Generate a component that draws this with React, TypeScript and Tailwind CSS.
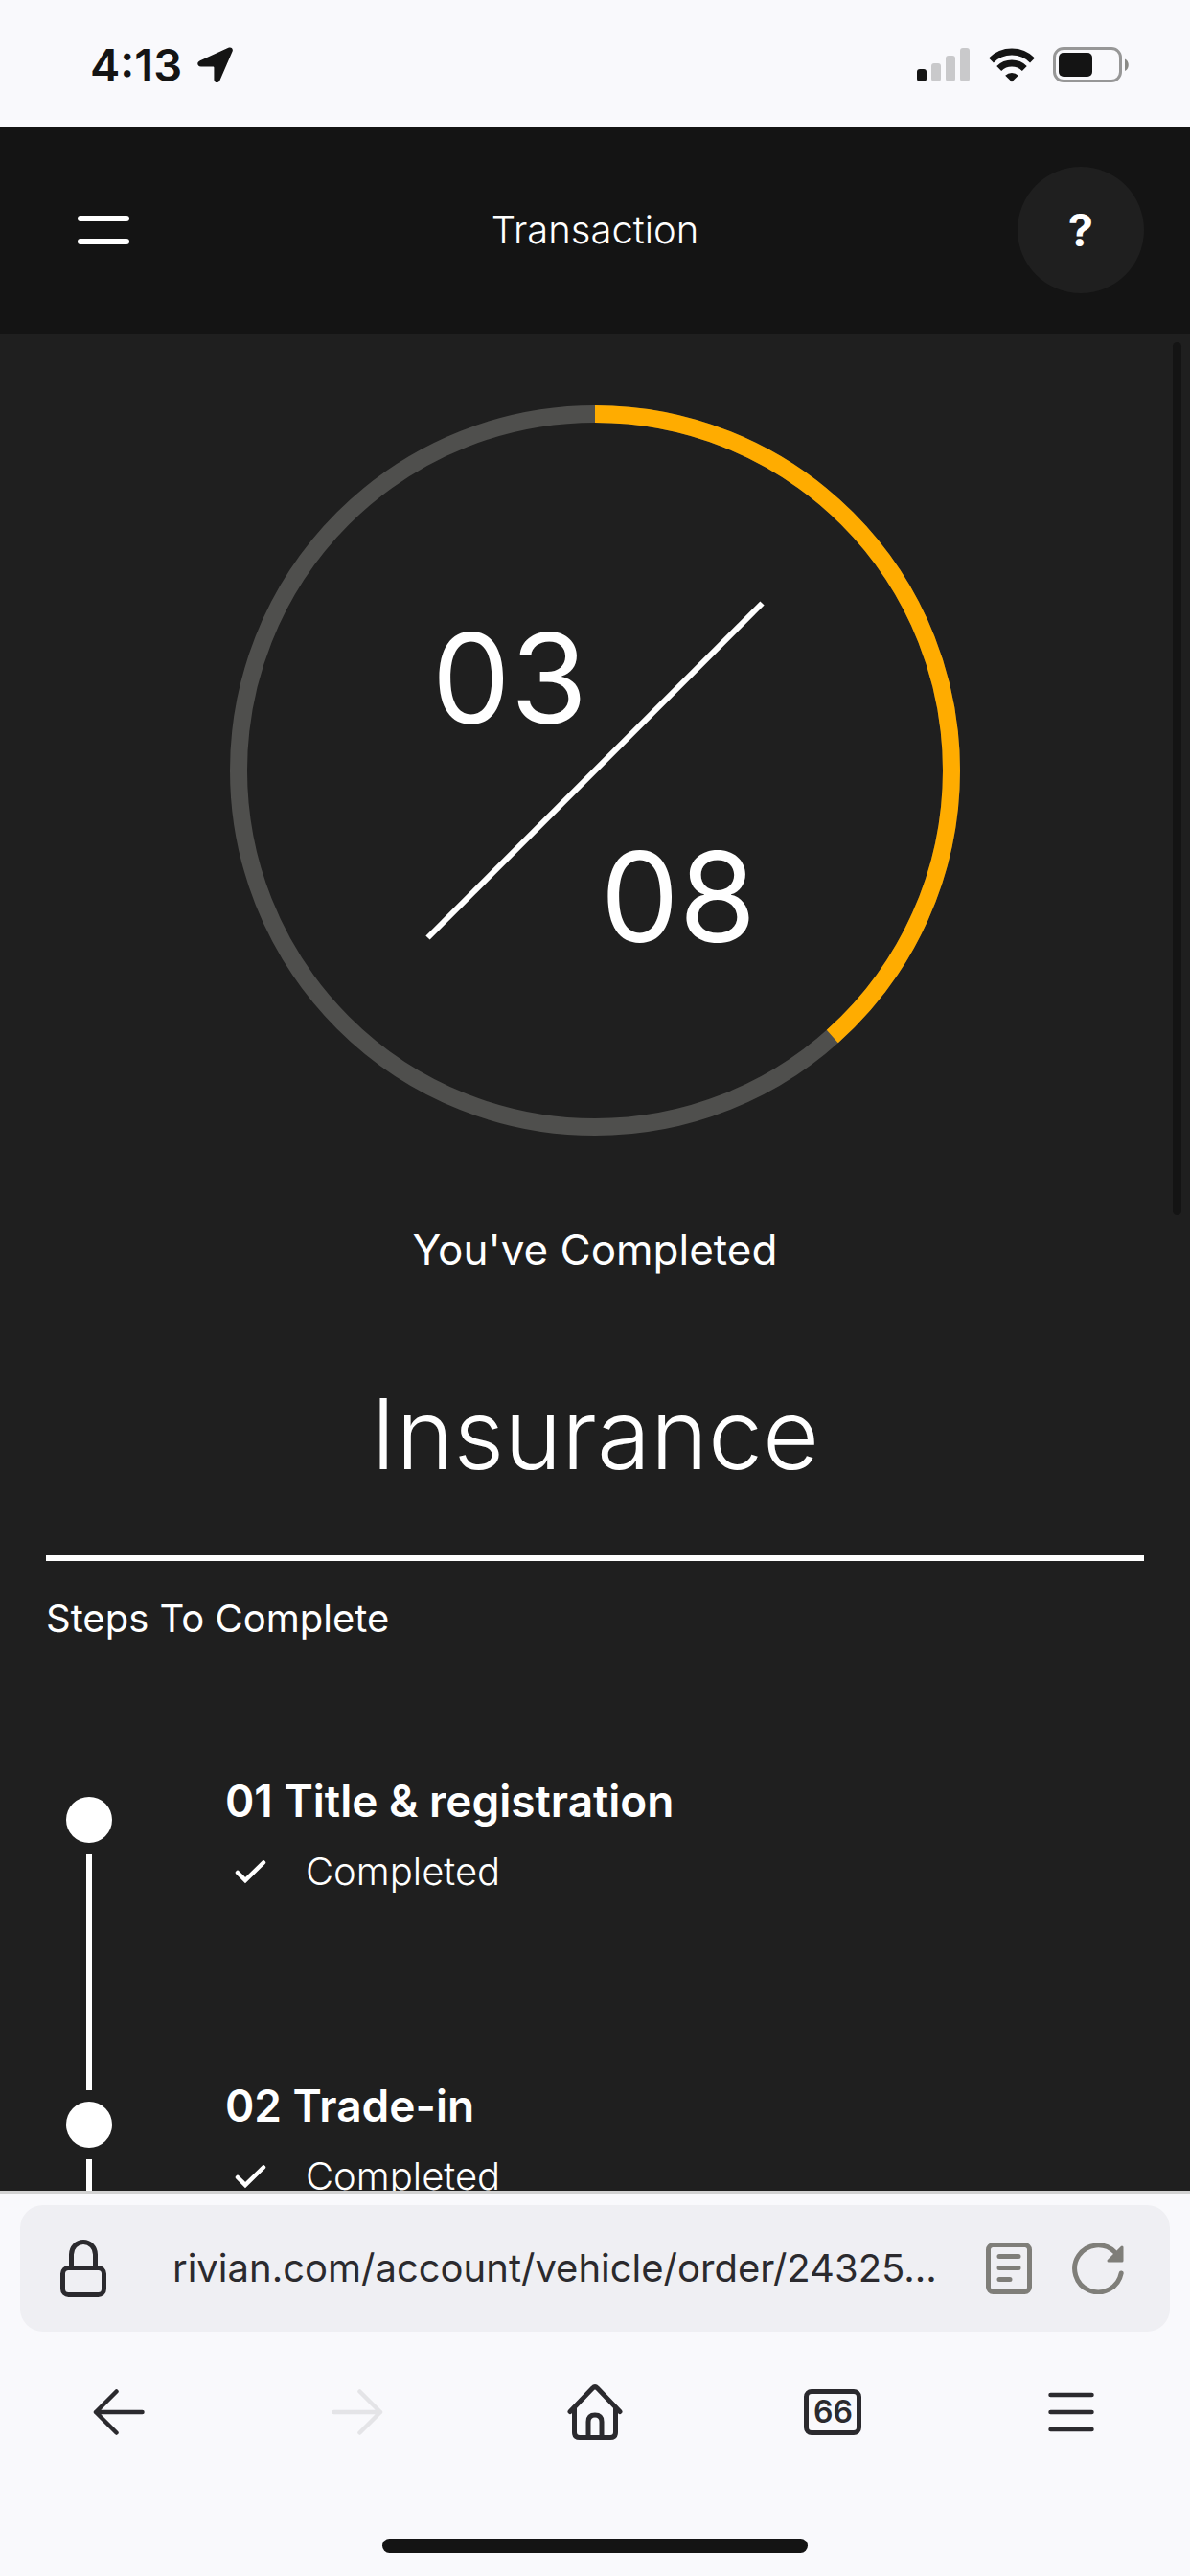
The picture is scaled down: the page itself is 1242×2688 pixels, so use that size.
import { ReactNode } from 'react'

const steps = [
  { id: '01', title: 'Title & registration', status: 'Completed' },
  { id: '02', title: 'Trade-in', status: 'Completed' },
]

function StatusBar() {
  return (
    <div className="flex h-[132px] shrink-0 items-center justify-between bg-[#f9f9fc] pt-1 pl-[94px] pr-[63px] text-[#141414]">
      <div className="flex items-center gap-4">
        <span className="text-[47px] leading-[56px] font-semibold">4:13</span>
        <svg width="38" height="38" viewBox="0 0 38 38" fill="currentColor" aria-hidden="true">
          <path d="M2.8 14.2 32.4.8c3-1.2 5.2 1 4.2 3.8L23.4 35c-1.400 3.200-6 2.600-6-1V21.600c0-.8-.4-1.200-1.200-1.200H3.800c-4.200 0-4.800-4.600-1-6.200Z" />
        </svg>
      </div>
      <div className="flex items-center gap-[19px]">
        <svg width="56" height="36" viewBox="0 0 56 36" aria-hidden="true">
          <rect x="0" y="22" width="10" height="13" rx="3" fill="#141414" />
          <rect x="15" y="16" width="10" height="19" rx="3" fill="#c9c9cb" />
          <rect x="30" y="8" width="10" height="27" rx="3" fill="#c9c9cb" />
          <rect x="45" y="0" width="10" height="35" rx="3" fill="#c9c9cb" />
        </svg>
        <svg width="48" height="36" viewBox="0 0 48 36" fill="none" stroke="#141414" aria-hidden="true">
          <path d="M2.500 12.900A30.500 30.500 0 0 1 45.500 12.900" strokeWidth="7" />
          <path d="M10.700 21.400A19 19 0 0 1 37.300 21.400" strokeWidth="7" />
          <path d="M24 35.600 17.200 28.800a9.600 9.600 0 0 1 13.600 0Z" fill="#141414" stroke="none" />
        </svg>
        <svg width="80" height="38" viewBox="0 0 80 38" aria-hidden="true">
          <rect x="1.500" y="1.500" width="69" height="34" rx="9.500" fill="none" stroke="#979797" strokeWidth="3" />
          <rect x="6" y="6" width="35" height="25" rx="5" fill="#141414" />
          <path d="M75 12.500c5 2 5 10.500 0 12.500Z" fill="#8a8a86" />
        </svg>
      </div>
    </div>
  )
}

function Header() {
  return (
    <header className="grid h-[216px] shrink-0 grid-cols-[1fr_auto_1fr] items-center bg-[#141414] px-12 text-white">
      <button type="button" aria-label="Menu" className="flex h-24 w-[120px] flex-col items-center justify-center gap-[18px]">
        <span className="h-[6px] w-[54px] rounded-full bg-white" />
        <span className="h-[6px] w-[54px] rounded-full bg-white" />
      </button>
      <h1 className="text-[40px] leading-[56px] font-light">Transaction</h1>
      <button
        type="button"
        aria-label="Help"
        className="size-[132px] justify-self-end rounded-full bg-[#1f1f1f] text-[47px] leading-[56px] font-bold"
      >
        ?
      </button>
    </header>
  )
}

function ProgressRing({ done, total }: { done: string; total: string }) {
  return (
    <svg className="w-[762px] max-w-full" viewBox="0 0 762 762" fill="none" role="img" aria-label={`${done} / ${total}`}>
      <circle cx="381" cy="381" r="372" stroke="#4f4f4d" strokeWidth="18" />
      <circle
        cx="381"
        cy="381"
        r="372"
        stroke="#ffac00"
        strokeWidth="18"
        pathLength="1000"
        strokeDasharray="384 1000"
        transform="rotate(-90 381 381)"
      />
      <path d="M206.500 555.500 555.500 206.500" stroke="#fff" strokeWidth="6" />
      <g className="text-[130px]" fill="#fff" textAnchor="middle">
        <text x="292" y="332">{done}</text>
        <text x="468" y="560">{total}</text>
      </g>
    </svg>
  )
}

function Step({ id, title, status }: { id: string; title: string; status: string }) {
  return (
    <li className="flex min-h-[318px] gap-[118px]">
      <div className="flex w-12 shrink-0 flex-col items-center gap-3 pb-3">
        <span className="size-12 rounded-full bg-white" />
        <span className="w-[6px] flex-1 bg-white" />
      </div>
      <div className="-mt-6">
        <h3 className="text-[46px] leading-[56px] font-semibold">
          {id} {title}
        </h3>
        <div className="mt-[18px] flex items-center gap-10 pl-2">
          <svg width="36" height="28" viewBox="0 0 36 28" fill="none" stroke="#fff" strokeWidth="4.500" strokeLinecap="round" aria-hidden="true">
            <path d="m5 15 8 8L32 4.500" />
          </svg>
          <p className="text-[40px] leading-[56px] font-light">{status}</p>
        </div>
      </div>
    </li>
  )
}

function NavButton({ label, disabled, children }: { label: string; disabled?: boolean; children: ReactNode }) {
  return (
    <button type="button" aria-label={label} disabled={disabled} className="flex h-24 items-center justify-center text-[#2b2a2e] disabled:text-[#e4e4e7]">
      {children}
    </button>
  )
}

const line = {
  fill: 'none',
  stroke: 'currentColor',
  strokeWidth: 5,
  strokeLinecap: 'round',
  strokeLinejoin: 'round',
} as const

function BrowserBar() {
  return (
    <footer className="flex shrink-0 flex-col border-t-[3px] border-[#d2d2d2] bg-[#f9f9fc] pb-6 text-[#2b2a2e]">
      <div className="mx-[21px] mt-3 flex h-[132px] items-center rounded-3xl bg-[#efeff3] pl-[42px] pr-12">
        <svg width="48" height="60" viewBox="0 0 48 60" {...line} aria-hidden="true">
          <rect x="2.500" y="29.500" width="43" height="28" rx="6" />
          <path d="M11.500 29V15.500a12.500 13 0 0 1 25 0V29" />
        </svg>
        <input
          type="text"
          readOnly
          aria-label="Address"
          value="rivian.com/account/vehicle/order/24325..."
          className="ml-[69px] min-w-0 flex-1 bg-transparent text-[40px] leading-[56px] outline-none"
        />
        <div className="flex items-center gap-[42px] text-[#7f7e79]">
          <button type="button" aria-label="Reader view">
            <svg width="48" height="54" viewBox="0 0 48 54" {...line}>
              <rect x="2.500" y="2.500" width="43" height="49" rx="5" />
              <path d="M14 14.500h20M14 26.500h20M14 38.500h11" />
            </svg>
          </button>
          <button type="button" aria-label="Reload">
            <svg width="54" height="54" viewBox="0 0 54 54" {...line}>
              <path d="M51.200 32A24.500 24.500 0 1 1 44.500 10" />
              <path d="M52 5v14H38Z" fill="currentColor" strokeWidth="3" />
            </svg>
          </button>
        </div>
      </div>
      <nav className="mt-9 grid grid-cols-5">
        <NavButton label="Back">
          <svg width="54" height="48" viewBox="0 0 54 48" {...line} strokeWidth={4.5}>
            <path d="M51.500 24H3M24.500 2.500 3 24l21.500 21.500" />
          </svg>
        </NavButton>
        <NavButton label="Forward" disabled>
          <svg width="54" height="48" viewBox="0 0 54 48" {...line} strokeWidth={4.5}>
            <path d="M2.500 24H51M29.500 2.500 51 24 29.500 45.500" />
          </svg>
        </NavButton>
        <NavButton label="Home">
          <svg width="58" height="58" viewBox="0 0 58 58" {...line}>
            <path d="M3 28.500 26.500 4q2.500-2.500 5 0L55 28.500" />
            <path d="M7.500 24.500V50q0 5.500 5.500 5.500h32q5.500 0 5.500-5.500V24.500" />
            <path d="M22 55V39q0-7 7-7t7 7v16" />
          </svg>
        </NavButton>
        <NavButton label="Tabs">
          <span className="flex h-12 w-[60px] items-center justify-center rounded-lg border-[5px] border-current text-[32px] leading-8 font-semibold">
            66
          </span>
        </NavButton>
        <NavButton label="Browser menu">
          <svg width="48" height="42" viewBox="0 0 48 42" {...line} strokeWidth={4.5}>
            <path d="M2.500 3h43M2.500 21h43M2.500 39h43" />
          </svg>
        </NavButton>
      </nav>
      <div className="mx-auto mt-[84px] h-[15px] w-[444px] rounded-full bg-[#141414]" />
    </footer>
  )
}

export default function App() {
  return (
    <div className="flex h-screen flex-col overflow-hidden bg-[#1f1f1f] font-['Inter',sans-serif]">
      <StatusBar />
      <Header />
      <main className="relative min-h-0 flex-1 overflow-hidden px-12 text-white">
        <div className="absolute top-[9px] right-[9px] h-[911px] w-[9px] rounded-full bg-[#141414]" />
        <section className="flex flex-col items-center pt-[75px]">
          <ProgressRing done="03" total="08" />
          <p className="mt-[91px] text-[44px] leading-[56px]">You've Completed</p>
          <h2 className="mt-[100px] text-[102px] leading-[128px] font-light">Insurance</h2>
        </section>
        <section className="mt-[63px] border-t-[6px] border-white pt-8">
          <h2 className="text-[40px] leading-[56px]">Steps To Complete</h2>
          <ol className="mt-[158px] pl-[21px]">
            {steps.map((step) => (
              <Step key={step.id} {...step} />
            ))}
          </ol>
        </section>
      </main>
      <BrowserBar />
    </div>
  )
}
